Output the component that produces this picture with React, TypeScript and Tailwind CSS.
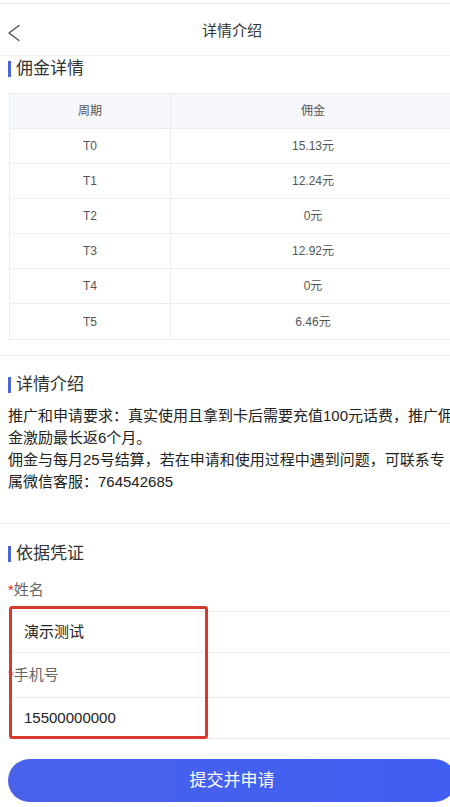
const ROWS = [
  { period: 'T0', amount: '15.13元' },
  { period: 'T1', amount: '12.24元' },
  { period: 'T2', amount: '0元' },
  { period: 'T3', amount: '12.92元' },
  { period: 'T4', amount: '0元' },
  { period: 'T5', amount: '6.46元' },
];

const FONT = { fontFamily: '"Liberation Sans", "Noto Sans CJK SC", sans-serif' };

function SectionTitle({ text }: { text: string }) {
  return (
    <div className="flex items-center h-[18px] px-2">
      <div className="w-[3px] h-[16px] bg-[#4a67d6]" />
      <span className="ml-[5px] text-[17px] leading-[18px] text-[#333]">{text}</span>
    </div>
  );
}

export default function App() {
  return (
    <div className="w-[450px] min-h-[807px] overflow-hidden bg-white" style={FONT}>
      <div className="w-[464px]">
        {/* top bar */}
        <div className="mt-[3px] border-t border-[#e8e8e8] h-[53px] pt-[4px] border-b border-b-[#f0f0f0] relative flex items-center justify-center">
          <svg className="absolute left-[7px] top-[20px]" width="14" height="18" viewBox="0 0 14 18" fill="none">
            <polyline points="12,1.5 2,9 12,16.5" stroke="#555" strokeWidth="1.5" strokeLinecap="round" strokeLinejoin="round" />
          </svg>
          <span className="text-[15px] text-[#333]">详情介绍</span>
        </div>

        {/* commission */}
        <div className="pt-[4px] pb-[15px] border-b border-[#efefef]">
          <SectionTitle text="佣金详情" />
          <div className="mt-[15px] ml-[9px] mr-[8px] border border-[#ebeef5] text-[12px] text-[#555]">
            <div className="flex h-[35px] bg-[#f5f7fa] border-b border-[#ebeef5]">
              <div className="w-[161px] border-r border-[#ebeef5] flex items-center justify-center">周期</div>
              <div className="flex-1 flex items-center justify-center">佣金</div>
            </div>
            {ROWS.map((r, i) => (
              <div
                key={r.period}
                className={`flex h-[35px] ${i < ROWS.length - 1 ? 'border-b border-[#ebeef5]' : ''}`}
              >
                <div className="w-[161px] border-r border-[#ebeef5] flex items-center justify-center">{r.period}</div>
                <div className="flex-1 flex items-center justify-center">{r.amount}</div>
              </div>
            ))}
          </div>
        </div>

        {/* intro */}
        <div className="pt-[20px] pb-[30px] border-b border-[#efefef]">
          <SectionTitle text="详情介绍" />
          <div className="mt-[11px] px-2 text-[15px] leading-[22px] text-[#222] whitespace-nowrap">
            <div>推广和申请要求：真实使用且拿到卡后需要充值100元话费，推广佣</div>
            <div>金激励最长返6个月。</div>
            <div>佣金与每月25号结算，若在申请和使用过程中遇到问题，可联系专</div>
            <div>属微信客服：764542685</div>
          </div>
        </div>

        {/* form */}
        <div className="pt-[21px] relative">
          <SectionTitle text="依据凭证" />
          <div className="mt-[12px] px-2 h-[30px] flex items-center text-[15px] text-[#666]">
            <span className="text-[#e02a2a]">*</span>姓名
          </div>
          <div className="mt-[6px] ml-2 h-[42px] border-y border-[#ececec] flex items-center pl-4 text-[15px] text-[#222]">
            演示测试
          </div>
          <div className="px-2 h-[44px] flex items-center text-[15px] text-[#666]">
            <span className="text-[#e02a2a]">*</span>手机号
          </div>
          <div className="ml-2 h-[42px] border-y border-[#ececec] flex items-center pl-4 text-[15px] text-[#222]">
            15500000000
          </div>
          {/* highlight annotation */}
          <div className="absolute left-[9px] top-[82px] w-[199px] h-[133px] border-[3px] border-[#d7392e] rounded-[3px] pointer-events-none" />

          <div className="px-2 mt-[20px] pb-[5px]">
            <button className="w-full h-[43px] rounded-full bg-gradient-to-r from-[#4a62ea] to-[#3f5ef2] text-white text-[17px]">
              提交并申请
            </button>
          </div>
        </div>
      </div>
    </div>
  );
}
